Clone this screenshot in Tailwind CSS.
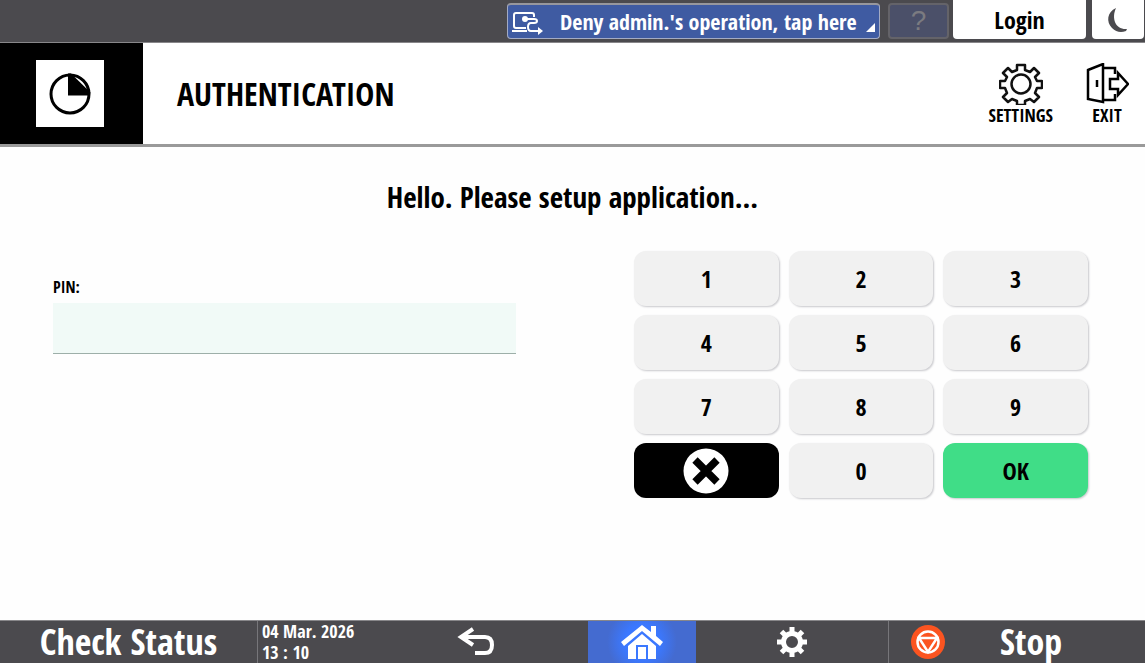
<!DOCTYPE html>
<html lang="en">
<head>
    <meta charset="UTF-8">
    <meta name="viewport" content="width=device-width, initial-scale=1.0">
    <title>Authentication</title>
    <script src="https://cdn.jsdelivr.net/npm/@tailwindcss/browser@4"></script>
</head>
<body class="bg-[#fefefe] text-black font-['Open_Sans_Condensed','Noto_Sans_Condensed','Roboto_Condensed','Liberation_Sans_Narrow',sans-serif]">
    <div class="min-h-screen flex flex-col">
        <!-- Status bar -->
        <div class="h-[43px] shrink-0 flex items-start justify-end bg-[#4b4a4e] border-b border-[#88878a]">
            <button type="button" class="relative mt-[3px] mr-2 w-[373px] h-9 flex items-center rounded border border-t-2 border-[#a3abc4] border-t-[#97979d] bg-[#3f5ba2] text-white text-[22px]">
                <svg class="ml-1 w-8 h-7 shrink-0" viewBox="0 0 32 28" fill="none" stroke="currentColor" stroke-width="2">
                    <path d="M22 9V7q0-2-2-2H4q-2 0-2 2v11q0 2 2 2h10M0 23h15"/>
                    <path d="M13 11h9q3 0 3 2t-3 2h-3q-3 0-3 4t3 4h8"/>
                    <circle cx="13" cy="11" r="3" fill="currentColor" stroke="none"/>
                    <path d="M26 19l5 4-5 4z" fill="currentColor" stroke="none"/>
                </svg>
                <span class="ml-4 whitespace-nowrap">Deny admin.'s operation, tap here</span>
                <svg class="absolute right-1 bottom-1.5 w-[9px] h-[9px]" viewBox="0 0 9 9"><path d="M9 0v9H0z" fill="#fff"/></svg>
            </button>
            <button type="button" disabled class="mt-[3px] mr-1 w-[61px] h-9 flex items-center justify-center rounded border-2 border-[#646369] bg-[#4b5069] text-[#7b7b80] text-[28px] font-['Liberation_Sans']">?</button>
            <button type="button" class="mr-1.5 w-[133px] h-[39px] rounded-b bg-white text-[24px]">Login</button>
            <button type="button" aria-label="Sleep" class="mr-px w-[52px] h-[39px] flex items-center justify-center rounded-b bg-white">
                <svg class="w-6 h-7" viewBox="0 0 24 28"><path d="M10 2C1 6 0 16 6 22q6 6 14 3l1-2C10 24 5 13 10 2z" fill="#4b4a4e"/></svg>
            </button>
        </div>

        <!-- Application header -->
        <header class="h-[104px] shrink-0 flex items-stretch bg-white border-b-3 border-[#9a9a9a]">
            <div class="w-[143px] flex items-center justify-center bg-black pr-[3px]">
                <div class="w-[68px] h-[67px] flex items-center justify-center bg-white">
                    <svg class="w-11 h-11" viewBox="0 0 44 44">
                        <circle cx="22" cy="22" r="19" fill="none" stroke="#000" stroke-width="3"/>
                        <path d="M20 1.500h3l19.500 19-1 3H20z" fill="#000"/>
                    </svg>
                </div>
            </div>
            <h1 class="ml-[34px] flex-1 self-center text-[32px]">AUTHENTICATION</h1>
            <button type="button" class="mt-5 mr-8 flex flex-col items-center text-[18px] leading-5">
                <svg class="w-[44px] h-[42px]" viewBox="0 0 44 42" fill="none" stroke="#111" stroke-width="2.500" stroke-linejoin="round">
                    <path d="M18 2h8v5l5 2 4-4 5 5-4 4 2 4h5v7h-5l-2 5 4 4-5 5-4-3-5 2v4h-8v-4l-5-2-4 3-5-5 4-4-2-5H1v-7h5l2-4-4-4 5-5 4 4 5-2z"/>
                    <circle cx="22" cy="21" r="9.500"/>
                </svg>
                <span>SETTINGS</span>
            </button>
            <button type="button" class="mt-5 mr-4 flex flex-col items-center text-[18px] leading-5">
                <svg class="w-[44px] h-[42px]" viewBox="0 0 44 42" fill="none" stroke="#000" stroke-width="2.500">
                    <path d="M3 7l15-6v38L3 36zM18 5h12v6M18 37h12v-6M12 17v7"/>
                    <path d="M25 16h8v-6l10 11-10 11v-6h-8z"/>
                </svg>
                <span>EXIT</span>
            </button>
        </header>

        <main class="flex-1 flex flex-col">
            <p class="mt-8 text-center text-[29px] leading-9">Hello. Please setup application...</p>
            <div class="mt-9 pl-[53px] pr-[57px] flex items-start gap-[118px]">
                <div class="mt-7 flex-1 flex flex-col">
                    <label for="pin" class="text-[16px] leading-4">PIN:</label>
                    <input id="pin" type="password" class="mt-2 w-full h-[51px] px-3 bg-[#f1faf7] border-b border-[#9dafa9] text-2xl outline-none">
                </div>
                <div class="w-[454px] grid grid-cols-3 gap-x-2.5 gap-y-[9px] text-[24px]">
                    <button type="button" class="h-[55px] rounded-xl bg-[#f1f1f1] shadow-[1px_1px_2px_#c8c8cc]">1</button>
                    <button type="button" class="h-[55px] rounded-xl bg-[#f1f1f1] shadow-[1px_1px_2px_#c8c8cc]">2</button>
                    <button type="button" class="h-[55px] rounded-xl bg-[#f1f1f1] shadow-[1px_1px_2px_#c8c8cc]">3</button>
                    <button type="button" class="h-[55px] rounded-xl bg-[#f1f1f1] shadow-[1px_1px_2px_#c8c8cc]">4</button>
                    <button type="button" class="h-[55px] rounded-xl bg-[#f1f1f1] shadow-[1px_1px_2px_#c8c8cc]">5</button>
                    <button type="button" class="h-[55px] rounded-xl bg-[#f1f1f1] shadow-[1px_1px_2px_#c8c8cc]">6</button>
                    <button type="button" class="h-[55px] rounded-xl bg-[#f1f1f1] shadow-[1px_1px_2px_#c8c8cc]">7</button>
                    <button type="button" class="h-[55px] rounded-xl bg-[#f1f1f1] shadow-[1px_1px_2px_#c8c8cc]">8</button>
                    <button type="button" class="h-[55px] rounded-xl bg-[#f1f1f1] shadow-[1px_1px_2px_#c8c8cc]">9</button>
                    <button type="button" aria-label="Clear" class="h-[55px] flex items-center justify-center rounded-xl bg-black">
                        <svg class="w-[46px] h-[46px]" viewBox="0 0 46 46">
                            <circle cx="23" cy="23" r="22.500" fill="#fff"/>
                            <path d="M12 12l22 22M34 12L12 34" stroke="#000" stroke-width="7.500"/>
                        </svg>
                    </button>
                    <button type="button" class="h-[55px] rounded-xl bg-[#f1f1f1] shadow-[1px_1px_2px_#c8c8cc]">0</button>
                    <button type="button" class="h-[55px] rounded-xl bg-[#40dd87] shadow-[1px_1px_2px_#c8c8cc]">OK</button>
                </div>
            </div>
        </main>

        <!-- System bar -->
        <footer class="h-[43px] shrink-0 flex items-stretch bg-[#4b4a4e] border-t border-[#88878a] text-white">
            <button type="button" class="w-[257px] text-[36px] leading-10">Check Status</button>
            <div class="w-[107px] pl-1 border-l border-[#77767a] text-[18px] leading-[21px]">
                <div>04 Mar. 2026</div>
                <div>13 : 10</div>
            </div>
            <button type="button" aria-label="Back" class="flex-1 flex items-center justify-center">
                <svg class="w-10 h-8" viewBox="0 0 40 32" fill="none" stroke="currentColor" stroke-width="4">
                    <path d="M17 3L5 11l12 8M5 11h24q7 0 7 8t-7 8H19"/>
                </svg>
            </button>
            <button type="button" aria-label="Home" class="w-[108px] flex items-center justify-center bg-[radial-gradient(circle,#3b78ff_30%,#446bd0_60%)]">
                <svg class="w-11 h-9" viewBox="0 0 44 36" fill="#fff">
                    <path d="M22 1L1 18l3 4L22 7l18 15 3-4-7-6V2h-5v6z"/>
                    <path d="M22 10L8 22v13h8V21h12v14h8V22z"/>
                    <path d="M18 23h8v12h-8z"/>
                </svg>
            </button>
            <button type="button" aria-label="Settings" class="w-[192px] flex items-center justify-center">
                <svg class="w-8 h-8" viewBox="0 0 32 32">
                    <circle cx="16" cy="16" r="8.500" fill="none" stroke="#fff" stroke-width="5"/>
                    <path d="M16 1v6M16 25v6M1 16h6M25 16h6M5.500 5.500l4 4M22.500 22.500l4 4M5.500 26.500l4-4M22.500 9.500l4-4" stroke="#fff" stroke-width="5"/>
                </svg>
            </button>
            <button type="button" class="w-[257px] pl-[22px] flex items-center border-l border-[#77767a] text-[36px] leading-10">
                <svg class="w-[34px] h-[34px]" viewBox="0 0 34 34" fill="none" stroke="#fff" stroke-width="2.500">
                    <circle cx="17" cy="17" r="17" fill="#fb5420" stroke="none"/>
                    <circle cx="17" cy="17" r="10.500"/>
                    <path d="M8 13h18l-9 14z"/>
                </svg>
                <span class="flex-1 pl-5 pr-12 text-center">Stop</span>
            </button>
        </footer>
    </div>
</body>
</html>
